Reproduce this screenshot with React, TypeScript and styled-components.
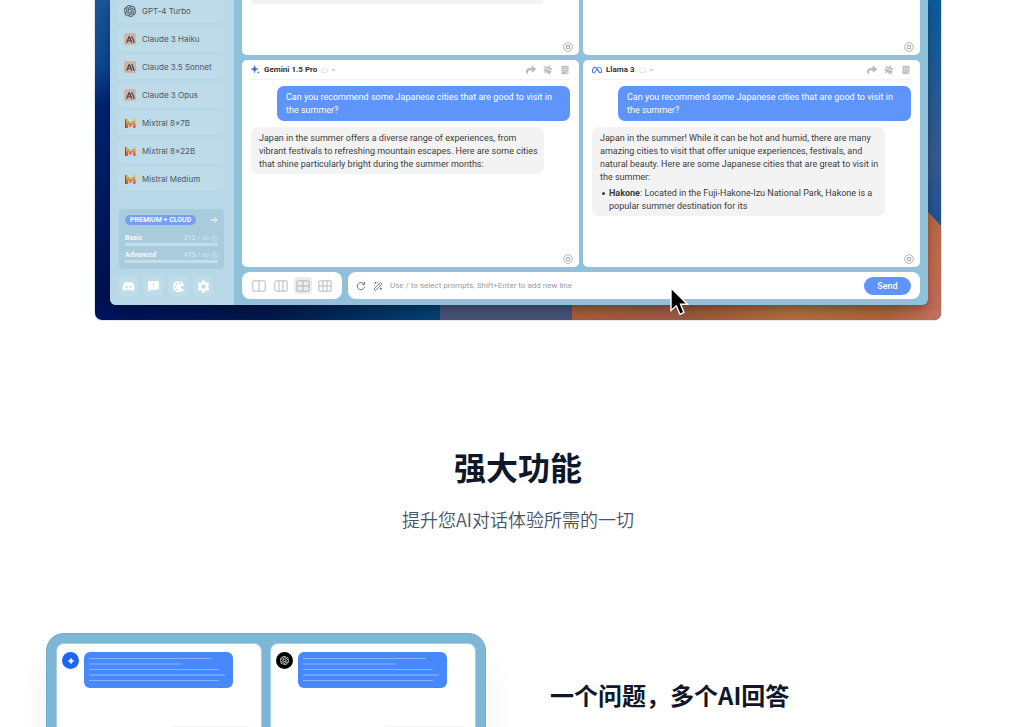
import React from 'react';
import styled, { createGlobalStyle } from 'styled-components';
import { SiOpenai, SiAnthropic, SiMeta } from 'react-icons/si';
import { FaDiscord, FaShare } from 'react-icons/fa';
import { MdFeedback, MdSettings } from 'react-icons/md';

const GlobalStyle = createGlobalStyle`
  *, *::before, *::after { box-sizing: border-box; }
  body { margin: 0; background: #fff; font-family: Roboto, "Noto Sans CJK SC", sans-serif; }
  h2, h3, p, ul { margin: 0; padding: 0; }
  ul { list-style: none; }
  button { border: 0; padding: 0; background: none; font: inherit; color: inherit; cursor: pointer; }
`;

const Page = styled.main`
  display: flex;
  flex-direction: column;
  height: 100vh;
  overflow: hidden;
`;

/* ---------- Hero demo ---------- */

const Demo = styled.section`
  position: relative;
  flex: none;
  width: calc(100% - 188px);
  max-width: 848px;
  margin: 0 auto;
  padding: 0 13px 15px 15px;
  overflow: hidden;
  border: 1px solid #dfe6ef;
  border-top: 0;
  border-radius: 0 0 8px 8px;
`;

const WallpaperSvg = styled.svg`
  position: absolute;
  inset: 0;
  width: 100%;
  height: 100%;
`;

const Window = styled.div`
  position: relative;
  display: flex;
  overflow: hidden;
  border-radius: 0 0 6px 6px;
  background: #90c1da;
  box-shadow: 0 4px 10px rgba(0, 0, 0, 0.3);
`;

const Sidebar = styled.aside`
  flex: none;
  width: 124px;
  padding: 0 9px 0 8px;
  background: #b9d8e7;
`;

const ModelList = styled.ul`
  display: flex;
  flex-direction: column;
  gap: 4px;
  margin-top: -1px;
`;

const ModelButton = styled.button`
  display: flex;
  align-items: center;
  gap: 6px;
  width: 100%;
  height: 24px;
  padding: 0 6px;
  border-radius: 5px;
  background: #bddbe9;
  color: #4d5a63;
  font-family: Inter, sans-serif;
  font-size: 8px;
  white-space: nowrap;
`;

const ModelIcon = styled.span<{ $tile?: boolean }>`
  display: grid;
  place-items: center;
  width: 12px;
  height: 12px;
  border-radius: 2px;
  background: ${(p) => (p.$tile ? '#cfb3a6' : 'transparent')};
  color: ${(p) => (p.$tile ? '#4a4546' : '#4d5f6a')};
`;

const PlanCard = styled.div`
  height: 62px;
  margin-top: 17px;
  padding: 6px 6px 0;
  border: 1px solid #bad8e5;
  border-radius: 5px;
  background: #a8ccdd;
  color: #f4fafc;
  font-size: 7px;
  line-height: 10px;
`;

const PlanHead = styled.div`
  display: flex;
  align-items: center;
  justify-content: space-between;
  margin-bottom: 8px;
`;

const PlanBadge = styled.span`
  padding: 0 5px;
  border-radius: 5px;
  background: #779fec;
  font-weight: 700;
`;

const Quota = styled.div`
  height: 13px;
  margin-bottom: 4px;
  border-bottom: 3px solid #c3dde9;
`;

const QuotaRow = styled.div`
  display: flex;
  align-items: center;
  justify-content: space-between;
  font-weight: 700;
`;

const QuotaCount = styled.span`
  display: flex;
  align-items: center;
  gap: 2px;
  color: #d8e9f1;
  font-weight: 400;
`;

const Socials = styled.div`
  display: flex;
  gap: 5px;
  margin-top: 6px;
`;

const SocialButton = styled.button`
  display: grid;
  place-items: center;
  width: 20px;
  height: 20px;
  border-radius: 5px;
  background: #bfdce9;
  color: #fff;
`;

const Workspace = styled.div`
  flex: 1;
  min-width: 0;
  display: flex;
  flex-direction: column;
  gap: 5px;
  padding: 0 8px 6px;
`;

const PanelGrid = styled.div`
  display: grid;
  grid-template-columns: 1fr 1fr;
  grid-template-rows: 55px minmax(207px, auto);
  gap: 5px 4px;
`;

const Panel = styled.article<{ $open?: boolean }>`
  position: relative;
  min-width: 0;
  padding: 0 9px;
  border-radius: ${(p) => (p.$open ? '0 0 5px 5px' : '5px')};
  background: #fff;
`;

const PanelHead = styled.header`
  display: flex;
  align-items: center;
  gap: 4px;
  height: 20px;
  margin-bottom: 6px;
  border-bottom: 1px solid #f2f2f2;
  color: #333;
  font-size: 8px;
  font-weight: 700;
`;

const PanelActions = styled.span`
  display: flex;
  gap: 7px;
  margin-left: auto;
  color: #bdbdbd;
`;

const IconButton = styled.button`
  display: grid;
  place-items: center;
`;

const Bubble = styled.div<{ $mine?: boolean }>`
  width: 293px;
  max-width: 92%;
  margin: 0 0 6px ${(p) => (p.$mine ? 'auto' : '0')};
  padding: ${(p) => (p.$mine ? '5px 12px 4px 9px' : '5px 2px 3px 8px')};
  border-radius: 7px;
  background: ${(p) => (p.$mine ? '#5f94fa' : '#f3f3f3')};
  color: ${(p) => (p.$mine ? '#fff' : '#3c3c3c')};
  font-size: 9px;
  line-height: 13px;
`;

const BubbleTail = styled.div`
  width: 293px;
  max-width: 92%;
  height: 4px;
  border-radius: 0 0 6px 6px;
  background: #f3f3f3;
`;

const CityList = styled.ul`
  margin-top: 3px;
  padding-left: 9px;
`;

const City = styled.li`
  position: relative;
  &::before {
    content: "";
    position: absolute;
    left: -7px;
    top: 5px;
    width: 3px;
    height: 3px;
    border-radius: 50%;
    background: #3c3c3c;
  }
`;

const StopButton = styled.button`
  position: absolute;
  right: 6px;
  bottom: 3px;
  width: 10px;
  height: 10px;
  display: grid;
`;

const Footer = styled.div`
  display: flex;
  gap: 6px;
  height: 27px;
`;

const LayoutPicker = styled.div`
  flex: none;
  display: flex;
  align-items: center;
  justify-content: center;
  gap: 4px;
  width: 100px;
  border-radius: 8px;
  background: #fff;
`;

const LayoutButton = styled.button<{ $active?: boolean }>`
  display: grid;
  place-items: center;
  width: 18px;
  height: 17px;
  border-radius: 3px;
  background: ${(p) => (p.$active ? '#ececec' : 'transparent')};
`;

const Composer = styled.form`
  flex: 1;
  min-width: 0;
  display: flex;
  align-items: center;
  gap: 7px;
  padding: 0 9px 0 8px;
  border-radius: 8px;
  background: #fff;
`;

const PromptInput = styled.input`
  flex: 1;
  min-width: 0;
  height: 18px;
  padding: 0;
  border: 0;
  outline: 0;
  font: 400 8px Roboto, sans-serif;
  color: #333;
  &::placeholder { color: #9b9b9b; opacity: 1; }
`;

const SendButton = styled.button`
  width: 47px;
  height: 18px;
  border-radius: 9px;
  background: #5f94fa;
  color: #fff;
  font-size: 9px;
  font-weight: 500;
`;

const Cursor = styled.svg`
  position: absolute;
  left: 68%;
  bottom: 4px;
  width: 20px;
  height: 30px;
`;

/* ---------- Features ---------- */

const SectionHead = styled.header`
  flex: none;
  padding: 125px 24px 100px;
  text-align: center;
  font-family: "Noto Sans CJK SC", sans-serif;
`;

const Title = styled.h2`
  color: #0f172a;
  font-size: 32px;
  font-weight: 700;
  line-height: 40px;
`;

const Subtitle = styled.p`
  margin-top: 19px;
  color: #475569;
  font-size: 18px;
  font-weight: 350;
  line-height: 28px;
`;

const Feature = styled.section`
  flex: 1;
  display: grid;
  grid-template-columns: 1fr 1fr;
  gap: 64px;
  padding: 0 46px;
`;

const Mock = styled.div`
  display: grid;
  grid-template-columns: 1fr 1fr;
  gap: 8px;
  padding: 9px 9px 0;
  border: 1px solid #70adca;
  border-bottom: 0;
  border-radius: 18px 18px 0 0;
  background: #7eb7d6;
  box-shadow: 0 24px 36px rgba(15, 23, 42, 0.06);
`;

const MockPanel = styled.div`
  display: flex;
  flex-direction: column;
  padding: 8px 8px 0 5px;
  border: 1px solid #a5cfe2;
  border-bottom: 0;
  border-radius: 8px 8px 0 0;
  background: #fff;
`;

const MockQuestion = styled.div`
  display: flex;
  gap: 5px;
`;

const Avatar = styled.span<{ $color: string }>`
  display: grid;
  place-items: center;
  width: 17px;
  height: 17px;
  border-radius: 50%;
  background: ${(p) => p.$color};
  color: #fff;
`;

const MockBubble = styled.div`
  width: 149px;
  height: 36px;
  border-radius: 6px;
  background: #4788fc;
`;

const MockReply = styled.div`
  align-self: flex-end;
  width: 85px;
  height: 24px;
  margin-top: 38px;
  border-radius: 5px;
  background: #f4f4f5;
`;

const FeatureTitle = styled.h3`
  padding-top: 46px;
  color: #0f172a;
  font-family: "Noto Sans CJK SC", sans-serif;
  font-size: 24px;
  font-weight: 700;
  line-height: 32px;
`;

/* ---------- Drawings ---------- */

const Wallpaper = () => (
  <WallpaperSvg viewBox="0 0 846 320" preserveAspectRatio="none" aria-hidden="true">
    <defs>
      <linearGradient id="left" x1="0" y1="0" x2="0" y2="1">
        <stop offset="0" stopColor="#1a5596" />
        <stop offset="0.22" stopColor="#0d468e" />
        <stop offset="0.34" stopColor="#00236f" />
        <stop offset="1" stopColor="#00104f" />
      </linearGradient>
      <linearGradient id="base" x1="0" y1="0" x2="1" y2="0">
        <stop offset="0" stopColor="#00125c" />
        <stop offset="0.2" stopColor="#00164a" />
        <stop offset="0.4" stopColor="#05406f" />
      </linearGradient>
      <linearGradient id="warm" x1="0" y1="0" x2="1" y2="0">
        <stop offset="0" stopColor="#a55a38" />
        <stop offset="0.29" stopColor="#9a5846" />
        <stop offset="0.3" stopColor="#94563a" />
        <stop offset="0.6" stopColor="#ae6c3f" />
        <stop offset="0.85" stopColor="#a8623c" />
        <stop offset="1" stopColor="#c4705d" />
      </linearGradient>
      <linearGradient id="right" x1="0" y1="0" x2="0" y2="1">
        <stop offset="0" stopColor="#0c5a9b" />
        <stop offset="0.7" stopColor="#38588f" />
        <stop offset="1" stopColor="#1c5293" />
      </linearGradient>
      <linearGradient id="corner" x1="0" y1="0" x2="0" y2="1">
        <stop offset="0" stopColor="#b9663f" />
        <stop offset="1" stopColor="#c06b58" />
      </linearGradient>
    </defs>
    <rect width="846" height="320" fill="url(#base)" />
    <rect width="20" height="304" fill="url(#left)" />
    <rect x="345" y="300" width="133" height="20" fill="#455175" />
    <rect x="477" y="300" width="369" height="20" fill="url(#warm)" />
    <rect x="826" width="20" height="226" fill="url(#right)" />
    <path d="M826 204L846 226V310H826Z" fill="url(#corner)" />
  </WallpaperSvg>
);

const MistralIcon = () => (
  <svg width="11" height="11" viewBox="0 0 11 11" aria-hidden="true">
    <path d="M0 1h2v9H0zM4.500 6.500h1v2h-1z" fill="#6b5552" />
    <path d="M1 1h2.200v2H1zM8.300 1h2.200v2H8.300z" fill="#f0b93e" />
    <path d="M1 3h4v2H1zM6.500 3h4v2h-4z" fill="#f19a3a" />
    <path d="M1 5h9.500v1.600H1z" fill="#ee7a35" />
    <path d="M1 6.500h2.200V10H1zM5 6.500h1.600v2H5zM8.300 6.500h2.200V10H8.300z" fill="#e5533a" />
  </svg>
);

const PaletteIcon = () => (
  <svg width="13" height="13" viewBox="0 0 13 13" aria-hidden="true">
    <path
      fillRule="evenodd"
      fill="#fff"
      d="M6.500 1C9 .8 11.500 2.400 11.800 4.800 12 6.400 10.600 6.700 9.300 6.500 8.200 6.400 8 7.300 8.900 7.900L11.600 9.600V11.200H9.800L8.800 10.200C9 11.600 7.900 12 6.500 12A5.500 5.500 0 0 1 6.500 1ZM4.500 3.200a.9.9 0 1 0 .01 0ZM8 2.600a.9.9 0 1 0 .01 0ZM3.200 6a.9.9 0 1 0 .01 0ZM5 8.700a.9.9 0 1 0 .01 0Z"
    />
  </svg>
);

const Sparkle = () => (
  <svg width="9" height="9" viewBox="0 0 10 10" aria-hidden="true">
    <path d="M4 .5Q4.500 4 8 4.500Q4.500 5 4 8.500Q3.500 5 0 4.500Q3.500 4 4 .5Z" fill="#3a74c8" stroke="#3a74c8" strokeWidth=".5" />
    <circle cx="8.300" cy="8.300" r="1" fill="#3a74c8" />
  </svg>
);

const StarIcon = () => (
  <svg width="8" height="8" viewBox="0 0 8 8" aria-hidden="true">
    <path d="M4 1Q4.500 3.500 7 4Q4.500 4.500 4 7Q3.500 4.500 1 4Q3.500 3.500 4 1Z" fill="#fff" stroke="#fff" strokeWidth=".4" />
  </svg>
);

const CloudMenu = () => (
  <svg width="18" height="8" viewBox="0 0 18 8" aria-hidden="true">
    <path d="M1 6.300h4.500a1.300 1.300 0 0 0 .1-2.600A2.200 2.200 0 0 0 1.500 3.500 1.400 1.400 0 0 0 1 6.300Z" fill="none" stroke="#d6d6d6" strokeWidth=".8" />
    <path d="M10.300 3h4.400L12.500 5.400Z" fill="#cdcdcd" />
  </svg>
);

const BroomIcon = () => (
  <svg width="10" height="10" viewBox="0 0 10 10" fill="#bdbdbd" aria-hidden="true">
    <path d="M5.900.3l1.600.6-.7 1.900 2.600 1-.6 1.500L1.300 2.500 1.900 1l3.300 1.200Z" />
    <path d="M1 3.200l7.600 2.900-1.700 3.600-1.200-.5.6-1.800-1.500 1.400-1.100-.4.6-1.800-1.800 1.300L.8 7.200l1.500-1.500L.4 5.200Z" />
  </svg>
);

const NotesIcon = () => (
  <svg width="10" height="10" viewBox="0 0 10 10" aria-hidden="true">
    <path d="M1.500.8h7v8.400h-7z" fill="#bdbdbd" />
    <path d="M2.500 2.800h5M2.500 4.600h5M2.500 6.600h2M6.500 5.700v3.500M6.500 7.300h2" stroke="#fff" strokeWidth=".5" />
  </svg>
);

const StopIcon = () => (
  <svg width="10" height="10" viewBox="0 0 10 10" aria-hidden="true">
    <circle cx="5" cy="5" r="4.300" fill="none" stroke="#a0a0a0" strokeWidth=".8" />
    <rect x="3.600" y="3.600" width="2.800" height="2.800" fill="none" stroke="#999" strokeWidth=".8" />
  </svg>
);

const LayoutIcon = ({ lines }: { lines: string }) => (
  <svg width="14" height="12" viewBox="0 0 14 12" aria-hidden="true">
    <rect x=".8" y=".8" width="12.400" height="10.400" rx="1.200" fill="none" stroke="#a8a8a8" strokeWidth=".8" />
    <path d={lines} stroke="#a8a8a8" strokeWidth=".8" />
  </svg>
);

const AskIcon = () => (
  <svg width="7" height="7" viewBox="0 0 7 7" aria-hidden="true">
    <circle cx="3.500" cy="3.500" r="2.800" fill="none" stroke="#d8e9f1" strokeWidth=".6" />
    <path d="M2.700 2.800a.8.8 0 1 1 .8.9v.4M3.500 4.800v.4" fill="none" stroke="#d8e9f1" strokeWidth=".6" />
  </svg>
);

const RefreshIcon = () => (
  <svg width="10" height="10" viewBox="0 0 10 10" fill="none" stroke="#666" strokeWidth=".9" aria-hidden="true">
    <path d="M7.900 3A3.600 3.600 0 1 0 8.600 5.500" />
    <path d="M8.600 1v2.500H6.200" />
  </svg>
);

const WandIcon = () => (
  <svg width="10" height="10" viewBox="0 0 10 10" fill="none" stroke="#666" strokeWidth=".8" aria-hidden="true">
    <path d="M1 8l6.500-6.500L9 3 2.400 9.500ZM5.800 3.200l1.500 1.500M2.500 1v2M1.500 2h2M7.800 6.500v2.400M6.600 7.700H9M1 4.500l1 .8M4.800.8v1" />
  </svg>
);

const MockLines = () => (
  <svg width="149" height="36" viewBox="0 0 149 36" stroke="#86b1fd" strokeWidth="1" aria-hidden="true">
    <path d="M5 6.500h123M5 17.500h130M5 28.500h130" />
    <path d="M5 12h92M5 23h136" strokeWidth="1.600" stroke="#79a8fd" />
  </svg>
);

/* ---------- Content ---------- */

const openai = <SiOpenai size={12} stroke="currentColor" strokeWidth={0.6} />;
const claude = <SiAnthropic size={9} />;

const models = [
  { name: 'GPT-4 Turbo', icon: openai },
  { name: 'Claude 3 Haiku', icon: claude, tile: true },
  { name: 'Claude 3.5 Sonnet', icon: claude, tile: true },
  { name: 'Claude 3 Opus', icon: claude, tile: true },
  { name: 'Mixtral 8×7B', icon: <MistralIcon /> },
  { name: 'Mixtral 8×22B', icon: <MistralIcon /> },
  { name: 'Mistral Medium', icon: <MistralIcon /> },
];

const quotas = [
  { name: 'Basic', count: '212 / ∞' },
  { name: 'Advanced', count: '475 / ∞' },
];

const socials = [
  { label: 'Discord', icon: <FaDiscord size={13} /> },
  { label: 'Feedback', icon: <MdFeedback size={13} /> },
  { label: 'Theme', icon: <PaletteIcon /> },
  { label: 'Settings', icon: <MdSettings size={15} /> },
];

const layouts = [
  { label: 'Two columns', lines: 'M7 1v10' },
  { label: 'Three columns', lines: 'M5 1v10M9 1v10' },
  { label: 'Two by two', lines: 'M7 1v10M1 6h12', active: true },
  { label: 'Three by two', lines: 'M5 1v10M9 1v10M1 6h12' },
];

const Stop = () => (
  <StopButton type="button" aria-label="Stop"><StopIcon /></StopButton>
);

const ChatPanel = ({ name, icon, children }: { name: string; icon: React.ReactNode; children: React.ReactNode }) => (
  <Panel>
    <PanelHead>
      {icon}
      <span>{name}</span>
      <CloudMenu />
      <PanelActions>
        <IconButton type="button" aria-label="Share"><FaShare size={10} /></IconButton>
        <IconButton type="button" aria-label="Clear"><BroomIcon /></IconButton>
        <IconButton type="button" aria-label="Notes"><NotesIcon /></IconButton>
      </PanelActions>
    </PanelHead>
    <Bubble $mine>Can you recommend some Japanese cities that are good to visit in the summer?</Bubble>
    <Bubble>{children}</Bubble>
    <Stop />
  </Panel>
);

export default function App() {
  return (
    <>
      <GlobalStyle />
      <Page>
        <Demo>
          <Wallpaper />
          <Window>
            <Sidebar>
              <ModelList>
                {models.map((m) => (
                  <li key={m.name}>
                    <ModelButton type="button">
                      <ModelIcon $tile={m.tile}>{m.icon}</ModelIcon>
                      {m.name}
                    </ModelButton>
                  </li>
                ))}
              </ModelList>
              <PlanCard>
                <PlanHead>
                  <PlanBadge>PREMIUM + CLOUD</PlanBadge>
                  <svg width="8" height="8" viewBox="0 0 8 8" fill="none" stroke="#fff" aria-hidden="true">
                    <path d="M.5 4h6.500M4 1l3 3-3 3" />
                  </svg>
                </PlanHead>
                {quotas.map((q) => (
                  <Quota key={q.name}>
                    <QuotaRow>
                      {q.name}
                      <QuotaCount>{q.count} <AskIcon /></QuotaCount>
                    </QuotaRow>
                  </Quota>
                ))}
              </PlanCard>
              <Socials>
                {socials.map((s) => (
                  <SocialButton key={s.label} type="button" aria-label={s.label}>{s.icon}</SocialButton>
                ))}
              </Socials>
            </Sidebar>
            <Workspace>
              <PanelGrid>
                <Panel $open><BubbleTail /><Stop /></Panel>
                <Panel $open><Stop /></Panel>
                <ChatPanel name="Gemini 1.5 Pro" icon={<Sparkle />}>
                  Japan in the summer offers a diverse range of experiences, from vibrant festivals to
                  refreshing mountain escapes. Here are some cities that shine particularly bright during
                  the summer months:
                </ChatPanel>
                <ChatPanel name="Llama 3" icon={<SiMeta size={10} color="#3a74d8" />}>
                  <p>
                    Japan in the summer! While it can be hot and humid, there are many amazing cities to
                    visit that offer unique experiences, festivals, and natural beauty. Here are some
                    Japanese cities that are great to visit in the summer:
                  </p>
                  <CityList>
                    <City>
                      <strong>Hakone</strong>: Located in the Fuji-Hakone-Izu National Park, Hakone is a
                      popular summer destination for its
                    </City>
                  </CityList>
                </ChatPanel>
              </PanelGrid>
              <Footer>
                <LayoutPicker>
                  {layouts.map((l) => (
                    <LayoutButton key={l.label} type="button" aria-label={l.label} $active={l.active}>
                      <LayoutIcon lines={l.lines} />
                    </LayoutButton>
                  ))}
                </LayoutPicker>
                <Composer onSubmit={(e) => e.preventDefault()}>
                  <IconButton type="button" aria-label="New chat"><RefreshIcon /></IconButton>
                  <IconButton type="button" aria-label="Prompts"><WandIcon /></IconButton>
                  <PromptInput
                    aria-label="Prompt"
                    placeholder="Use / to select prompts, Shift+Enter to add new line"
                  />
                  <SendButton type="submit">Send</SendButton>
                </Composer>
              </Footer>
            </Workspace>
          </Window>
          <Cursor viewBox="0 0 20 30" aria-hidden="true">
            <path
              d="M1 2V24.500L6.300 19.800L10 28.300L14 26.500L10.500 18.300H17.500Z"
              fill="#000"
              stroke="#fff"
              strokeWidth="1.400"
            />
          </Cursor>
        </Demo>

        <SectionHead>
          <Title>强大功能</Title>
          <Subtitle>提升您AI对话体验所需的一切</Subtitle>
        </SectionHead>

        <Feature>
          <Mock>
            <MockPanel>
              <MockQuestion>
                <Avatar $color="#1b66f5"><StarIcon /></Avatar>
                <MockBubble><MockLines /></MockBubble>
              </MockQuestion>
              <MockReply />
            </MockPanel>
            <MockPanel>
              <MockQuestion>
                <Avatar $color="#000"><SiOpenai size={9} /></Avatar>
                <MockBubble><MockLines /></MockBubble>
              </MockQuestion>
              <MockReply />
            </MockPanel>
          </Mock>
          <FeatureTitle>一个问题，多个AI回答</FeatureTitle>
        </Feature>
      </Page>
    </>
  );
}
